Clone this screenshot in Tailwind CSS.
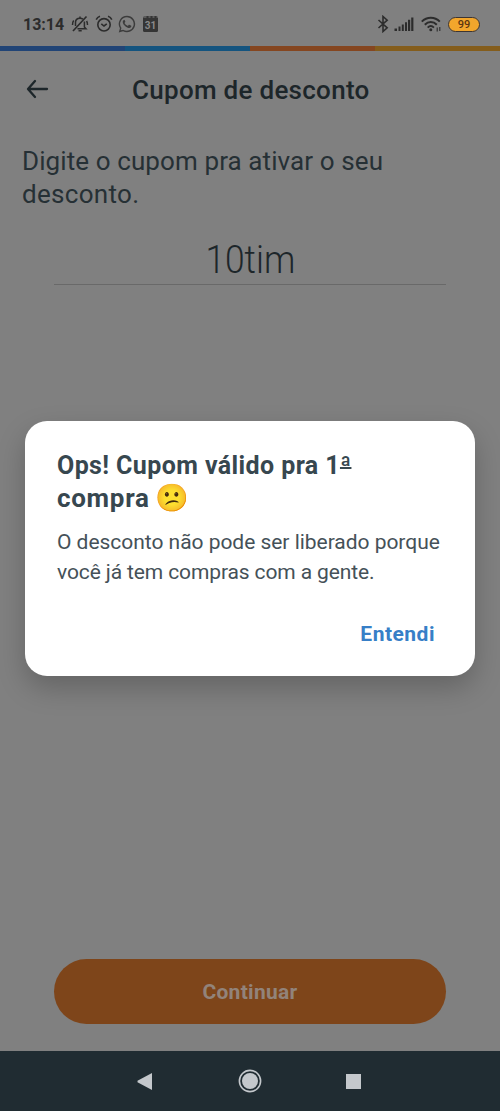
<!DOCTYPE html>
<html lang="pt-BR">
<head>
<meta charset="utf-8">
<meta name="viewport" content="width=device-width, initial-scale=1">
<title>Cupom de desconto</title>
<script src="https://cdn.jsdelivr.net/npm/@tailwindcss/browser@4"></script>
</head>
<body class="bg-[#808080] font-[Roboto,sans-serif] text-[#1d262a]">
<div class="relative flex h-[1111px] w-[500px] flex-col overflow-hidden whitespace-nowrap">

  <!-- Status bar -->
  <div class="flex h-[46px] shrink-0 items-center pt-[2px] pl-[23px] pr-[20px] text-[#2c2c2c]">
    <span class="w-[42px] pt-[1px] text-[16px] leading-none font-bold">13:14</span>
    <svg class="ml-[6px] h-[18px] w-[18px]" viewBox="0 0 18 18" fill="none" stroke="currentColor" stroke-width="1.5">
      <path d="M4.500 11V7.500C4.500 4.900 6.200 3.200 9 3.200c1.200 0 2.200.3 2.900.9M13.400 6.500V12l1.600 1.800H6.500"/>
      <path d="M15.500 1.500 2 16" stroke-width="1.700"/>
      <path d="M7.500 15.700h3.200M9 3V1.500M1.500 10c-.1-1.900.3-3.200 1.200-4.500M15.600 6c.7 1.200.9 2.300.9 4"/>
    </svg>
    <svg class="ml-[6px] h-[18px] w-[18px]" viewBox="0 0 18 18" fill="none" stroke="currentColor" stroke-width="1.600">
      <circle cx="9" cy="9.800" r="6.200"/>
      <path d="M6.300 8.800 9 11l2.800-2.200M1.200 4.600C1.900 3 3.300 1.800 5 1.300M16.800 4.600C16.100 3 14.700 1.800 13 1.300"/>
    </svg>
    <svg class="ml-[5px] h-[18px] w-[18px]" viewBox="0 0 24 24" fill="#3c3c3c">
      <path d="M12 1A11 11 0 0 0 2.600 17.700L1 23.200l5.700-1.500A11 11 0 1 0 12 1Zm0 2a9 9 0 1 1-5.100 16.500l-3.200.9.900-3.100A9 9 0 0 1 12 3Z"/>
      <path d="M8.300 6.500c-.3 0-.7.1-1 .5-.6.600-1.100 1.500-.9 2.900.3 1.600 1.500 3.400 3.300 5 2 1.700 4 2.600 5.500 2.400 1.200-.2 2.300-1 2.500-2 .1-.7.1-1 0-1.100l-2.500-1.300c-.4-.1-.6-.1-.8.2l-1 1.200c-.2.2-.4.2-.7.1-1.800-.8-3.100-2-3.900-3.500-.1-.3-.1-.4.1-.6l.8-1c.1-.2.1-.4 0-.6l-1-2.200Z"/>
    </svg>
    <div class="ml-[7px] flex h-[16px] w-[15px] items-end justify-center rounded-[1.500px] border-t-[2px] border-dotted border-[#5b5b5b] bg-[#353535] pb-[2px] text-[10px] leading-[9px] font-bold text-[#8a8a8a]">31</div>
    <svg class="ml-auto h-[18px] w-[12px]" viewBox="0 0 12 18" fill="none" stroke="currentColor" stroke-width="1.600">
      <path d="M1.500 5 10.200 12.800 6 16.500V1.500L10.200 5.200 1.500 13"/>
    </svg>
    <svg class="ml-[5px] h-[14px] w-[20px]" viewBox="0 0 20 14" fill="currentColor">
      <path d="M.500 11.500h2.500V14H.500zM4.500 9.500h2V14h-2zM7.800 7.500h2V14h-2zM11 5.200h2V14h-2zM14 2.700h2.200V14H14zM17.200.5h2.200V14h-2.200z"/>
    </svg>
    <svg class="ml-[7px] h-[16px] w-[21px]" viewBox="0 0 21 16" fill="none" stroke="currentColor" stroke-width="2">
      <path d="M.8 5.600C5.900.400 13.700.400 18.800 5.600M3.800 8.700c3.500-3.600 8.500-3.600 12 0M6.700 11.600c1.900-1.900 4.300-1.900 6.200 0"/>
      <circle cx="9.800" cy="13.800" r="1.500" fill="currentColor" stroke="none"/>
      <path d="M16.200 11.500v4M18.800 11v4" stroke-width="1.100"/>
    </svg>
    <div class="ml-[6px] flex h-[15px] w-[32px] items-center justify-center rounded-full border-[1.500px] border-[#3d3532] bg-[#f2a62c] text-[11px] leading-none font-medium text-[#5a3512]">99</div>
  </div>

  <!-- Brand stripe -->
  <div class="grid h-[5px] shrink-0 grid-cols-4">
    <div class="bg-[#214476]"></div><div class="bg-[#14547f]"></div><div class="bg-[#854620]"></div><div class="bg-[#845d1c]"></div>
  </div>

  <!-- Header -->
  <div class="flex h-[78px] shrink-0 items-center pl-[26px]">
    <svg class="-mt-[2px] h-[20px] w-[23px]" viewBox="0 0 23 20" fill="none" stroke="currentColor" stroke-width="2.300" stroke-linejoin="round" stroke-linecap="round">
      <path d="M21 10H2.500M9 2 2 10l7 8"/>
    </svg>
    <h1 class="ml-[83px] text-[26px] leading-[30px] font-medium tracking-[0.280px]">Cupom de desconto</h1>
  </div>

  <!-- Coupon form -->
  <p class="mt-[16px] flex flex-col pl-[22px] text-[26px] leading-[33px] text-[#263035]">
    <span class="tracking-[0.100px]">Digite o cupom pra ativar o seu</span>
    <span class="tracking-[0.300px]">desconto.</span>
  </p>
  <div class="mx-[54px] mt-[25px] flex h-[49px] shrink-0 justify-center border-b border-[#696969] text-[38px] leading-[49px] font-light"><span class="scale-x-[0.930]">10tim</span></div>

  <button class="mx-[54px] mt-auto mb-[27px] h-[65px] shrink-0 rounded-full bg-[#7e451a] pt-[2px] text-[21px] font-bold tracking-[0.300px] text-[#92837a]">Continuar</button>

  <!-- System navigation -->
  <div class="flex h-[60px] shrink-0 items-center bg-[#202c32] pl-[137px] text-[#c4c8cc]">
    <svg class="h-[17px] w-[15px]" viewBox="0 0 15 17" fill="currentColor"><path d="M15 0v17L.5 9.200v-1.400z"/></svg>
    <svg class="ml-[86px] h-[24px] w-[24px]" viewBox="0 0 24 24" fill="none" stroke="currentColor"><circle cx="12" cy="12" r="10.600" stroke-width="1.600"/><circle cx="12" cy="12" r="8" fill="currentColor" stroke="none"/></svg>
    <div class="ml-[84px] h-[15px] w-[15px] bg-current"></div>
  </div>

  <!-- Dialog -->
  <div class="absolute top-[421px] left-[25px] flex h-[255px] w-[450px] flex-col rounded-[22px] bg-white pt-[29px] pl-[32px] text-[#37474f] shadow-[0_12px_28px_rgba(0,0,0,0.220)]">
    <h2 class="flex flex-col text-[25px] leading-[32px] font-bold">
      <span class="tracking-[0.400px]">Ops! Cupom válido pra 1<span class="underline decoration-[2px] underline-offset-[-7px]">ª</span></span>
      <span class="flex h-[32px] items-center"><span class="w-[92px] text-[26px] tracking-[0.700px]">compra</span><span class="ml-[6px] text-[27px] leading-none font-normal">😕</span></span>
    </h2>
    <p class="mt-[13px] flex flex-col text-[21px] leading-[30px] text-[#455158]">
      <span class="tracking-[-0.030px]">O desconto não pode ser liberado porque</span>
      <span class="tracking-[-0.120px]">você já tem compras com a gente.</span>
    </p>
    <button class="mt-[32px] mr-[40px] self-end text-[21px] leading-[30px] font-bold tracking-[0.500px] text-[#377fc7]">Entendi</button>
  </div>
</div>
</body>
</html>
